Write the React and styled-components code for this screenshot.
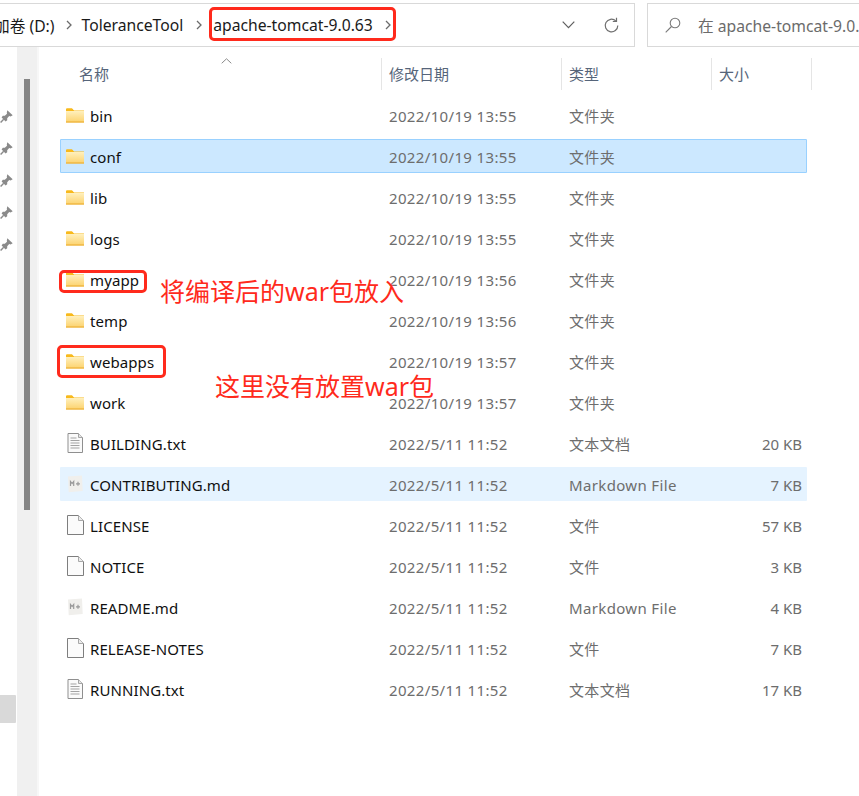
import React from "react";
import styled, { createGlobalStyle } from "styled-components";

const fontStack = `"Noto Sans", "Noto Sans CJK SC", sans-serif`;

const GlobalStyle = createGlobalStyle`
  html, body {
    margin: 0;
    padding: 0;
    background: #fff;
    overflow: hidden;
  }
  body {
    font-family: ${fontStack};
  }
`;

const rows = [
  { name: "bin", date: "2022/10/19 13:55", type: "文件夹", icon: "folder" },
  { name: "conf", date: "2022/10/19 13:55", type: "文件夹", icon: "folder", state: "selected" },
  { name: "lib", date: "2022/10/19 13:55", type: "文件夹", icon: "folder" },
  { name: "logs", date: "2022/10/19 13:55", type: "文件夹", icon: "folder" },
  { name: "myapp", date: "2022/10/19 13:56", type: "文件夹", icon: "folder" },
  { name: "temp", date: "2022/10/19 13:56", type: "文件夹", icon: "folder" },
  { name: "webapps", date: "2022/10/19 13:57", type: "文件夹", icon: "folder" },
  { name: "work", date: "2022/10/19 13:57", type: "文件夹", icon: "folder" },
  { name: "BUILDING.txt", date: "2022/5/11 11:52", type: "文本文档", size: "20 KB", icon: "text" },
  { name: "CONTRIBUTING.md", date: "2022/5/11 11:52", type: "Markdown File", size: "7 KB", icon: "md", state: "hover" },
  { name: "LICENSE", date: "2022/5/11 11:52", type: "文件", size: "57 KB", icon: "blank" },
  { name: "NOTICE", date: "2022/5/11 11:52", type: "文件", size: "3 KB", icon: "blank" },
  { name: "README.md", date: "2022/5/11 11:52", type: "Markdown File", size: "4 KB", icon: "md" },
  { name: "RELEASE-NOTES", date: "2022/5/11 11:52", type: "文件", size: "7 KB", icon: "blank" },
  { name: "RUNNING.txt", date: "2022/5/11 11:52", type: "文本文档", size: "17 KB", icon: "text" },
];

const Page = styled.div`
  position: relative;
  width: 859px;
  height: 796px;
  overflow: hidden;
  background: #fff;
`;

const TopBar = styled.div`
  display: flex;
  gap: 12px;
  padding-top: 3px;
  margin-left: -8px;
  height: 44px;
`;

const PathBox = styled.div`
  width: 643px;
  height: 44px;
  box-sizing: border-box;
  border: 1.5px solid #d9d9d9;
  display: flex;
  align-items: center;
  font-size: 15.7px;
  color: #1a1a1a;
  flex-shrink: 0;
`;

const Crumb = styled.span`
  white-space: nowrap;
  margin-left: ${(p) => p.$left}px;
`;

const Chevron = styled.svg`
  width: 6px;
  height: 10px;
  margin-left: ${(p) => p.$left}px;
  flex-shrink: 0;
`;

const PathTools = styled.div`
  display: flex;
  align-items: center;
  margin-left: auto;
  padding-right: 14px;
  gap: 28px;
`;

const SearchBox = styled.div`
  flex: 1;
  min-width: 240px;
  height: 44px;
  box-sizing: border-box;
  border: 1.5px solid #d9d9d9;
  display: flex;
  align-items: center;
  padding-left: 17px;
  gap: 17px;
  font-size: 15.7px;
  color: #6b6b6b;
  white-space: nowrap;
`;

const Body = styled.div`
  display: flex;
  height: 749px;
`;

const Sidebar = styled.div`
  width: 17px;
  flex-shrink: 0;
  display: flex;
  flex-direction: column;
  align-items: flex-start;
  padding-top: 63px;
  box-sizing: border-box;
  gap: 19px;
`;

const SideSelected = styled.div`
  width: 16px;
  height: 28px;
  background: #d9d9d9;
  margin-top: 425px;
  border-radius: 0 1px 1px 0;
`;

const Track = styled.div`
  width: 22px;
  flex-shrink: 0;
  background: #f0f0f0;
  border-right: 2px solid #f7f7f7;
  padding: 32px 0 0 7px;
  box-sizing: border-box;
`;

const Thumb = styled.div`
  width: 6px;
  height: 431px;
  background: #858585;
`;

const Main = styled.div`
  flex: 1;
  min-width: 0;
  padding-left: 21px;
`;

const HeaderRow = styled.div`
  display: flex;
  height: 32px;
  margin-top: 11px;
  position: relative;
`;

const HeaderCell = styled.div`
  width: ${(p) => p.$width}px;
  box-sizing: border-box;
  padding-left: ${(p) => p.$pad}px;
  font-size: 15px;
  line-height: 32px;
  color: #56657a;
  border-right: 1px solid #e5e5e5;
  flex-shrink: 0;
`;

const SortCaret = styled.svg`
  position: absolute;
  left: 161px;
  top: 0;
  width: 11px;
  height: 6px;
`;

const List = styled.div`
  display: flex;
  flex-direction: column;
  gap: 7px;
  margin-top: 8px;
`;

const Row = styled.div`
  display: grid;
  grid-template-columns: 30px 299px 180px 1fr 60px;
  align-items: center;
  width: 747px;
  height: 34px;
  padding-top: 2px;
  box-sizing: border-box;
  font-size: 15px;
  background: ${(p) =>
    p.$state === "selected" ? "#cce8ff" : p.$state === "hover" ? "#e5f3ff" : "transparent"};
  outline: ${(p) => (p.$state === "selected" ? "1px solid #99d1ff" : "none")};
  outline-offset: -1px;
  border-radius: 1px;
`;

const IconCell = styled.div`
  display: flex;
  justify-content: center;
  margin-bottom: 2px;
`;

const NameCell = styled.div`
  color: #101010;
  white-space: nowrap;
  letter-spacing: 0.1px;
`;

const MetaCell = styled.div`
  color: #6d6d6d;
  white-space: nowrap;
  letter-spacing: 0.35px;
  margin-bottom: ${(p) => (p.$cjk ? 2 : 0)}px;
`;

const SizeCell = styled.div`
  color: #6d6d6d;
  text-align: right;
  padding-right: 5px;
  white-space: nowrap;
`;

/* red marks that were painted over the screenshot */
const RedBox = styled.div`
  position: absolute;
  left: ${(p) => p.$x}px;
  top: ${(p) => p.$y}px;
  width: ${(p) => p.$w}px;
  height: ${(p) => p.$h}px;
  box-sizing: border-box;
  border: 3px solid #ff2a1c;
  border-radius: 5px;
`;

const RedNote = styled.div`
  position: absolute;
  left: ${(p) => p.$x}px;
  top: ${(p) => p.$y}px;
  font-size: 25px;
  line-height: 30px;
  color: #ff2a1c;
  white-space: nowrap;
`;

const FolderIcon = () => (
  <svg width="18" height="15" viewBox="0 0 18 15">
    <defs>
      <linearGradient id="folderFill" x1="0" y1="0" x2="0" y2="1">
        <stop offset="0" stopColor="#fff0bd" />
        <stop offset="1" stopColor="#fcd26c" />
      </linearGradient>
    </defs>
    <path d="M0 1.5a1 1 0 0 1 1-1h5l2 2h10v2H0z" fill="#f8b91c" />
    <rect x="0" y="3" width="18" height="11.5" fill="url(#folderFill)" />
    <rect x="0" y="13.5" width="18" height="1" fill="#eaa92c" />
    <path d="M0 1.5a1 1 0 0 1 1-1h5l2 2.5H0z" fill="#f8b91c" />
  </svg>
);

const TextIcon = () => (
  <svg width="16" height="20" viewBox="0 0 16 20">
    <path d="M1 .5h10.5l4 4v15H1z" fill="#fafafa" stroke="#8f8f8f" />
    <path d="M11.5.5v4h4" fill="#e6e6e6" stroke="#a5a5a5" />
    <path d="M3.5 5h6M3.5 7.5h9M3.5 10h9M3.5 12.5h9M3.5 15h9" stroke="#a3a3a3" strokeWidth="1" />
  </svg>
);

const BlankIcon = () => (
  <svg width="17" height="20" viewBox="0 0 17 20">
    <path d="M.5.5h11l5 5v14H.5z" fill="#fbfbfb" stroke="#7e7e7e" />
    <path d="M11.5.5v5h5" fill="#ececec" stroke="#a8a8a8" />
  </svg>
);

const MdIcon = () => (
  <svg width="16" height="18" viewBox="0 0 16 18">
    <path d="M1 1.5 15 .5l.7 15.5-14 1.3z" fill="#f0efec" />
    <path d="M3.5 11V6.5l1.6 2 1.6-2V11M9 8.8h4M11 6.8v4" fill="none" stroke="#9a9a9a" strokeWidth="1.2" />
  </svg>
);

const PinIcon = () => (
  <svg width="13" height="13" viewBox="0 0 13 13">
    <path d="M7.3.3 12.7 5.2 10.6 6.4 9.2 6 7.2 8.2 7.2 10.2 5.6 11.4 1.6 7.4 2.8 5.8h2L7 3.8 6.8 2.4z" fill="#8a8a8a" />
    <path d="M3.7 9.2.6 12.5" stroke="#8a8a8a" strokeWidth="1.4" />
  </svg>
);

const icons = {
  folder: FolderIcon,
  text: TextIcon,
  blank: BlankIcon,
  md: MdIcon,
};

const CrumbChevron = ({ left }) => (
  <Chevron $left={left} viewBox="0 0 6 10">
    <path d="M1 1l4 4-4 4" fill="none" stroke="#6b6b6b" strokeWidth="1.3" />
  </Chevron>
);

export default function App() {
  return (
    <Page>
      <GlobalStyle />
      <TopBar>
        <PathBox>
          <Crumb $left={1}>加卷 (D:)</Crumb>
          <CrumbChevron left={11} />
          <Crumb $left={10}>ToleranceTool</Crumb>
          <CrumbChevron left={13} />
          <Crumb $left={11}>apache-tomcat-9.0.63</Crumb>
          <CrumbChevron left={12} />
          <PathTools>
            <svg width="13" height="8" viewBox="0 0 13 8">
              <path d="M.7.7 6.5 6.7 12.3.7" fill="none" stroke="#5f5f5f" strokeWidth="1.2" />
            </svg>
            <svg width="17" height="17" viewBox="0 0 17 17">
              <path d="M14.8 8.5a6.3 6.3 0 1 1-2-4.6" fill="none" stroke="#6f6f6f" strokeWidth="1.2" />
              <path d="M13.5.8v3.7H9.8" fill="none" stroke="#6f6f6f" strokeWidth="1.2" />
            </svg>
          </PathTools>
        </PathBox>
        <SearchBox>
          <svg width="16" height="16" viewBox="0 0 16 16">
            <circle cx="10" cy="6" r="4.8" fill="none" stroke="#7a7a7a" strokeWidth="1.1" />
            <path d="M6.5 9.5.7 15.3" stroke="#7a7a7a" strokeWidth="1.1" />
          </svg>
          <span>在 apache-tomcat-9.0.</span>
        </SearchBox>
      </TopBar>
      <Body>
        <Sidebar>
          {[0, 1, 2, 3, 4].map((i) => (
            <PinIcon key={i} />
          ))}
          <SideSelected />
        </Sidebar>
        <Track>
          <Thumb />
        </Track>
        <Main>
          <HeaderRow>
            <SortCaret viewBox="0 0 11 6">
              <path d="M.7 5.3 5.5.8l4.8 4.5" fill="none" stroke="#8a8a8a" strokeWidth="1" />
            </SortCaret>
            <HeaderCell $width={322} $pad={19}>名称</HeaderCell>
            <HeaderCell $width={180} $pad={7}>修改日期</HeaderCell>
            <HeaderCell $width={150} $pad={7}>类型</HeaderCell>
            <HeaderCell $width={100} $pad={7}>大小</HeaderCell>
          </HeaderRow>
          <List>
            {rows.map((r) => {
              const Icon = icons[r.icon];
              return (
                <Row key={r.name} $state={r.state}>
                  <IconCell>
                    <Icon />
                  </IconCell>
                  <NameCell>{r.name}</NameCell>
                  <MetaCell>{r.date}</MetaCell>
                  <MetaCell $cjk={r.type !== "Markdown File"}>{r.type}</MetaCell>
                  <SizeCell>{r.size}</SizeCell>
                </Row>
              );
            })}
          </List>
        </Main>
      </Body>
      <RedBox $x={209} $y={7} $w={187} $h={34} />
      <RedBox $x={59} $y={270} $w={88} $h={23} />
      <RedBox $x={57} $y={345} $w={109} $h={33} />
      <RedNote $x={160} $y={276}>将编译后的war包放入</RedNote>
      <RedNote $x={215} $y={371}>这里没有放置war包</RedNote>
    </Page>
  );
}
